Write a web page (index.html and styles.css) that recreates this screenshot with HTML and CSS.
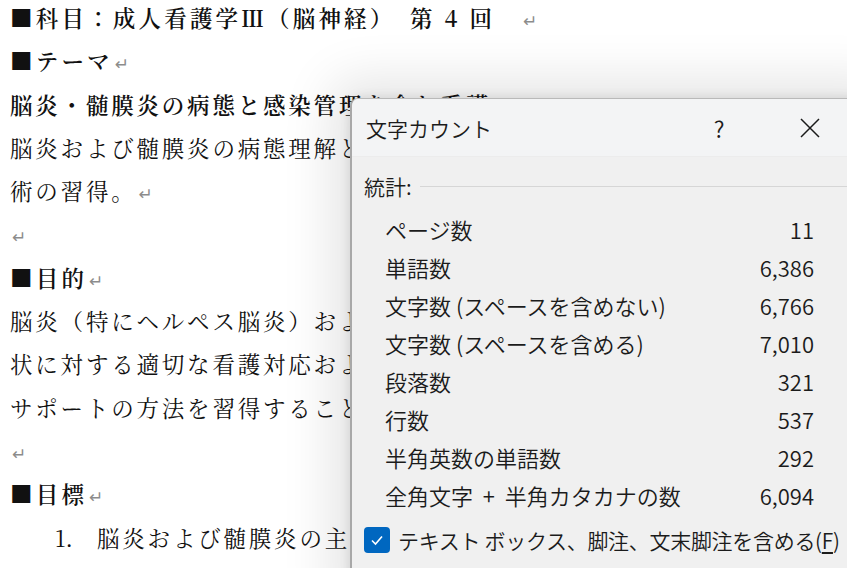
FILE: index.html
```html
<!DOCTYPE html>
<html lang="ja">
<head>
<meta charset="utf-8">
<link rel="stylesheet" href="styles.css">
</head>
<body>
<div class="doc">
  <p class="line head">■科目：成人看護学Ⅲ（脳神経）　第 4 回　<span class="ret">↵</span></p>
  <p class="line head">■テーマ<span class="ret">↵</span></p>
  <p class="line bold">脳炎・髄膜炎の病態と感染管理を含む看護</p>
  <p class="line">脳炎および髄膜炎の病態理解と感染管理を含む看護技</p>
  <p class="line">術の習得。<span class="ret">↵</span></p>
  <p class="line"><span class="ret">↵</span></p>
  <p class="line head">■目的<span class="ret">↵</span></p>
  <p class="line">脳炎（特にヘルペス脳炎）および髄膜炎の主な症</p>
  <p class="line">状に対する適切な看護対応および感染予防、家族</p>
  <p class="line">サポートの方法を習得することを目的とする。</p>
  <p class="line"><span class="ret">↵</span></p>
  <p class="line head">■目標<span class="ret">↵</span></p>
  <p class="line item"><span class="num">1.</span>脳炎および髄膜炎の主な症状を説明できる。</p>
</div>

<div class="dialog">
  <div class="titlebar">
    <span class="title">文字カウント</span>
    <span class="help">?</span>
    <svg class="close" width="24" height="24" viewBox="0 0 24 24"><path d="M3 3 L21 21 M21 3 L3 21" stroke="#1a1a1a" stroke-width="1.5" fill="none"/></svg>
  </div>
  <div class="body">
    <div class="group">
      <span class="group-label">統計:</span>
      <span class="rule"></span>
    </div>
    <div class="stats">
      <div class="row"><span>ページ数</span><span>11</span></div>
      <div class="row"><span>単語数</span><span>6,386</span></div>
      <div class="row"><span>文字数 (スペースを含めない)</span><span>6,766</span></div>
      <div class="row"><span>文字数 (スペースを含める)</span><span>7,010</span></div>
      <div class="row"><span>段落数</span><span>321</span></div>
      <div class="row"><span>行数</span><span>537</span></div>
      <div class="row"><span>半角英数の単語数</span><span>292</span></div>
      <div class="row"><span>全角文字&nbsp;&nbsp;+&nbsp;&nbsp;半角カタカナの数</span><span>6,094</span></div>
    </div>
    <label class="check">
      <span class="box"><svg width="16" height="16" viewBox="0 0 16 16"><path d="M3 8.5 L6.5 12 L13 4.5" stroke="#fff" stroke-width="1.6" fill="none"/></svg></span>
      <span class="check-label">テキスト ボックス、脚注、文末脚注を含める(<u>F</u>)</span>
    </label>
  </div>
</div>
</body>
</html>
```

FILE: styles.css
```css
html, body {
  margin: 0;
  padding: 0;
  background: #ffffff;
  width: 847px;
  height: 568px;
  overflow: hidden;
}

body {
  position: relative;
}

.doc {
  padding-left: 10px;
  margin-top: -4px;
  font-family: "Noto Serif CJK JP", "Noto Sans CJK JP", "Liberation Serif", serif;
  font-size: 22.5px;
  letter-spacing: 2.8px;
  color: #111;
}

.line {
  margin: 0;
  height: 43.3px;
  line-height: 43.3px;
  white-space: nowrap;
}

.head {
  font-weight: 600;
  letter-spacing: 3.2px;
  font-size: 22.5px;
}

.bold {
  font-weight: 600;
  letter-spacing: 2.8px;
}

.ret {
  color: #8c8c8c;
  font-family: "DejaVu Sans", sans-serif;
  font-weight: 400;
  font-size: 17px;
  letter-spacing: 0;
  margin-left: 2px;
}

.item {
  padding-left: 45px;
}

.num {
  display: inline-block;
  width: 42px;
  letter-spacing: 0;
}

.dialog {
  position: absolute;
  left: 350px;
  top: 98px;
  width: 520px;
  height: 500px;
  background: #f0f0f0;
  border: 1px solid #b9b9b9;
  border-left: 2px solid #a8a8a8;
  border-radius: 8px;
  box-shadow: 0 0 50px 20px rgba(0, 0, 0, 0.10), 0 0 12px rgba(0, 0, 0, 0.12);
  overflow: hidden;
  font-family: "Noto Sans CJK JP", "Noto Sans", sans-serif;
  font-weight: 350;
  color: #1b1b1b;
}

.titlebar {
  height: 57px;
  background: #f3f4f5;
  display: flex;
  align-items: center;
  padding-left: 14px;
  border-bottom: 1px solid #ececec;
}

.title {
  font-size: 21px;
  flex: 1;
}

.help {
  font-size: 23px;
  width: 30px;
  margin-right: 64px;
  text-align: center;
}

.close {
  margin-right: 50px;
}

.body {
  padding: 12px 0 0 12px;
}

.group {
  display: flex;
  align-items: center;
  height: 34px;
}

.group-label {
  font-size: 21px;
  margin-right: 8px;
}

.rule {
  flex: 1;
  height: 1px;
  background: #d6d6d6;
}

.stats {
  padding: 7px 0 0 21px;
  width: 429px;
}

.row {
  display: flex;
  justify-content: space-between;
  height: 38px;
  line-height: 38px;
  font-size: 22px;
}

.check {
  display: flex;
  align-items: center;
  margin-top: 11px;
  gap: 8px;
}

.box {
  width: 26px;
  height: 26px;
  border-radius: 4px;
  background: #0067c0;
  display: flex;
  align-items: center;
  justify-content: center;
}

.check-label {
  font-size: 21px;
  letter-spacing: -0.3px;
  white-space: nowrap;
}

.check-label u {
  text-decoration-thickness: 1.5px;
  text-underline-offset: 3px;
}
```
